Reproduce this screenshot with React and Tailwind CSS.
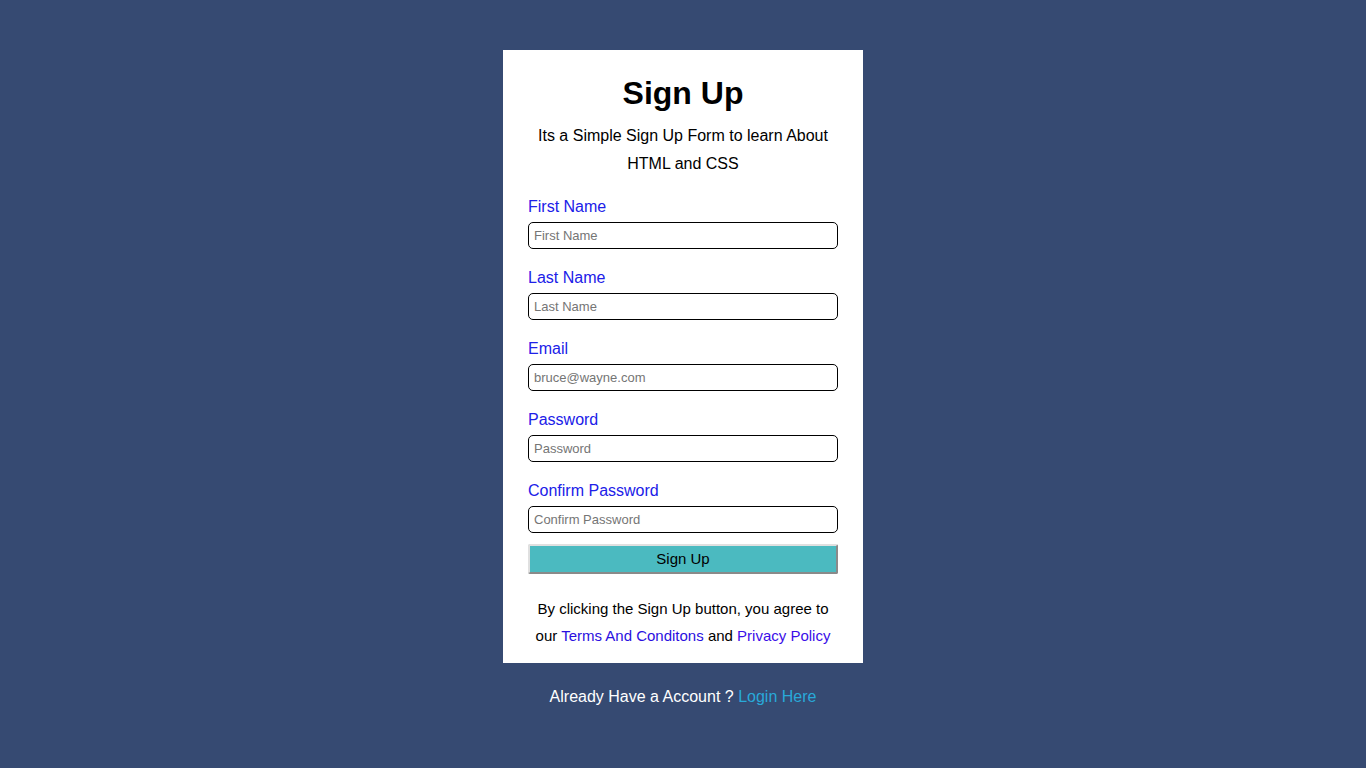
export default function App() {
  const fields = [
    { label: "First Name", placeholder: "First Name", type: "text" },
    { label: "Last Name", placeholder: "Last Name", type: "text" },
    { label: "Email", placeholder: "bruce@wayne.com", type: "email" },
    { label: "Password", placeholder: "Password", type: "password" },
    { label: "Confirm Password", placeholder: "Confirm Password", type: "password" },
  ];

  return (
    <div className="min-h-screen bg-[#364a72] flex flex-col items-center pt-[50px] font-['Liberation_Sans',Arial,sans-serif]">
      <div className="w-[360px] bg-white px-[25px] pt-[25px] pb-[14px]">
        <h1 className="text-center text-[32px] leading-[37px] font-bold text-black">Sign Up</h1>
        <p className="mt-[10px] text-center text-[16px] leading-[28px] text-black">
          Its a Simple Sign Up Form to learn About HTML and CSS
        </p>

        {/* FORM */}
        <form className="mt-[20px]" onSubmit={(e) => e.preventDefault()}>
          {fields.map((f, i) => (
            <div key={f.label} className={i > 0 ? "mt-[20px]" : ""}>
              <label className="block text-[16px] leading-[18px] text-[#2020e8]">{f.label}</label>
              <input
                type={f.type}
                placeholder={f.placeholder}
                className="mt-[6px] block w-full h-[27px] border border-black rounded-[5px] px-[5px] text-[13px] placeholder:text-[#757575] outline-none"
              />
            </div>
          ))}
          <button
            type="submit"
            className="mt-[11px] block w-full h-[30px] bg-[#4bbac0] text-[15px] text-black border-2 border-t-[#e0e0e0] border-l-[#e0e0e0] border-b-[#8a8a8a] border-r-[#8a8a8a] rounded-[2px]"
          >
            Sign Up
          </button>
        </form>

        <p className="mt-[21px] text-center text-[15px] leading-[27px] text-black">
          By clicking the Sign Up button, you agree to our{" "}
          <a href="#" className="text-[#2a0fe0]">Terms And Conditons</a> and{" "}
          <a href="#" className="text-[#3b0ee8]">Privacy Policy</a>
        </p>
      </div>

      <p className="mt-[25px] text-[16px] leading-[18px] text-white">
        Already Have a Account ? <a href="#" className="text-[#29a9d9]">Login Here</a>
      </p>
    </div>
  );
}
